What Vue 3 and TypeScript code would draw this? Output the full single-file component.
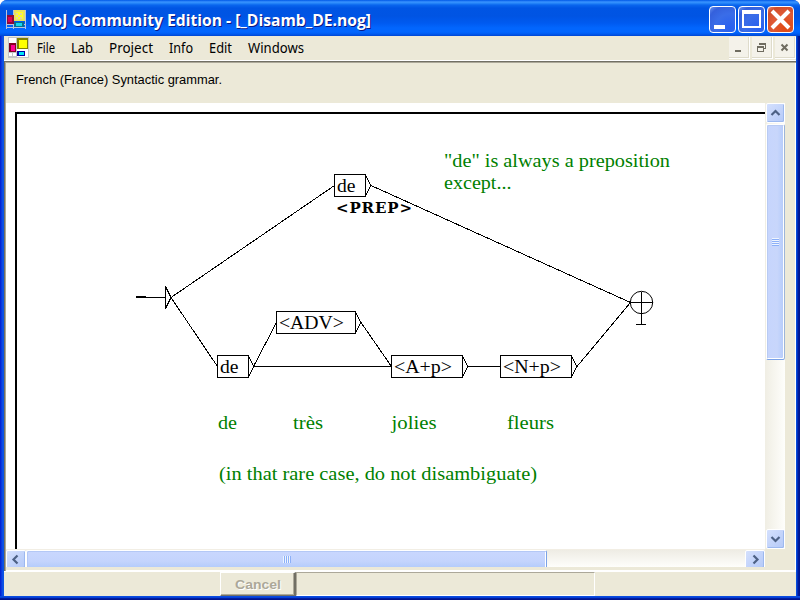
<script setup lang="ts">
interface GraphNode {
  id: string
  label: string
  x: number
  y: number
  w: number
  textW: number
}
interface Note {
  text: string
  x: number
  y: number
  w: number
}

const menus: { label: string; w: number }[] = [
  { label: 'File', w: 18 },
  { label: 'Lab', w: 22 },
  { label: 'Project', w: 44 },
  { label: 'Info', w: 24 },
  { label: 'Edit', w: 23 },
  { label: 'Windows', w: 56 },
]

const nodes: GraphNode[] = [
  { id: 'prep', label: 'de', x: 334, y: 174, w: 31, textW: 18.5 },
  { id: 'adv', label: '<ADV>', x: 276, y: 311, w: 79, textW: 65 },
  { id: 'de', label: 'de', x: 217, y: 355, w: 31, textW: 18.5 },
  { id: 'adj', label: '<A+p>', x: 391, y: 355, w: 71, textW: 58 },
  { id: 'noun', label: '<N+p>', x: 500, y: 355, w: 71, textW: 58 },
]

const links: number[][] = [
  [170.5, 297, 334, 185],
  [170.5, 297, 217, 366],
  [370.5, 185, 630, 302],
  [253, 366, 276, 322],
  [253, 366, 391, 366],
  [360.5, 322, 391, 366],
  [467, 366, 500, 366],
  [576.5, 366, 630, 302],
]

const notes: Note[] = [
  { text: '"de" is always a preposition', x: 444, y: 167, w: 226 },
  { text: 'except...', x: 444, y: 189, w: 67.5 },
  { text: 'de', x: 218, y: 429, w: 19 },
  { text: 'très', x: 293, y: 429, w: 30 },
  { text: 'jolies', x: 391.5, y: 429, w: 45 },
  { text: 'fleurs', x: 507, y: 429, w: 47 },
  { text: '(in that rare case, do not disambiguate)', x: 219, y: 480, w: 318 },
]
</script>

<template>
  <div class="window">
    <header class="titlebar">
      <svg class="app-icon" width="20" height="19" viewBox="0 0 20 19" shape-rendering="crispEdges">
        <path d="M0 0h1v19H0zM7 0h1v19H7zM0 5h7v1H0zM0 14h20v1H0zM0 17h20v1H0zM19 0h1v19h-1z" fill="#b9c4dc" />
        <path d="M1 5h7v9H1z" fill="#8b0a3a" /><path d="M2 7h4v5H2z" fill="#e00050" />
        <path d="M8 0h11v11H8z" fill="#e8e060" /><path d="M10 2h7v7h-7z" fill="#ffff20" />
        <path d="M10 3h2v2h-2zM14 3h2v2h-2zM12 5h2v2h-2zM10 7h2v2h-2zM14 7h2v2h-2z" fill="#e4d898" />
        <path d="M8 12h10v5H8z" fill="#087090" /><path d="M10 13h6v3h-6z" fill="#10d8f0" />
      </svg>
      <svg class="title" width="350" height="24">
        <text x="0" y="17" textLength="341" lengthAdjust="spacingAndGlyphs">NooJ Community Edition - [_Disamb_DE.nog]</text>
      </svg>
      <div class="caption-buttons">
        <button class="cap"><svg width="23" height="23"><path d="M3 17h11v4H3z" fill="#fff" /></svg></button>
        <button class="cap"><svg width="23" height="23"><path fill-rule="evenodd" d="M2 2h19v18H2zM4 6v12h15V6z" fill="#fff" /></svg></button>
        <button class="cap close"><svg width="23" height="23"><path d="M3 3l17 17M20 3l-17 17" stroke="#fff" stroke-width="4" /></svg></button>
      </div>
    </header>

    <nav class="menubar">
      <svg class="doc-icon" width="21" height="21" viewBox="0 0 21 21" shape-rendering="crispEdges">
        <path d="M0 0h21v21H0z" fill="#c4c4c4" />
        <path d="M1 1h7v5H1zM1 16h3v3H1zM5 16h3v3H5zM9 12h11v8H9z" fill="#fff" />
        <path d="M1 6h7v9H1z" fill="#850020" /><path d="M3 8h4v6H3z" fill="#ff0090" />
        <path d="M9 1h11v11H9z" fill="#808000" /><path d="M11 3h8v8h-8z" fill="#ffff00" />
        <path d="M9 14h8v5H9z" fill="#0000a0" /><path d="M11 15h5v3h-5z" fill="#00e8f8" />
      </svg>
      <svg v-for="m in menus" :key="m.label" class="menu" :width="m.w + 1" height="22">
        <text x="0" y="15" :textLength="m.w" lengthAdjust="spacingAndGlyphs">{{ m.label }}</text>
      </svg>
      <div class="mdi-buttons">
        <button class="mdi"><svg width="20" height="21"><path d="M6 13h6v2H6z" fill="#6f6c60" /></svg></button>
        <button class="mdi"><svg width="20" height="21" fill="none" stroke="#6f6c60" shape-rendering="crispEdges"><path d="M5.5 9.5h6v5h-6zM5 10.500h7M7.500 8V6.500h6v5H12M7 7.500h7" /></svg></button>
        <button class="mdi"><svg width="20" height="21"><path d="M6.500 7.500l6 6M12.500 7.500l-6 6" stroke="#6f6c60" stroke-width="2" /></svg></button>
      </div>
    </nav>

    <main class="document">
      <div class="info">
        <svg width="220" height="20"><text x="0" y="12" textLength="206" lengthAdjust="spacingAndGlyphs">French (France) Syntactic grammar.</text></svg>
      </div>
      <div class="viewport">
        <svg class="graph" width="759" height="446" viewBox="6 103 759 446">
          <path d="M15 549V112H765V114H17V549z" fill="#000" />
          <g class="strokes" transform="translate(.5 .5)">
            <line v-for="(l, i) in links" :key="i" :x1="l[0]" :y1="l[1]" :x2="l[2]" :y2="l[3]" />
            <path d="M135 296H145M135 297H165M165 286V308M165 286L170.500 297L165 308" />
            <g v-for="n in nodes" :key="n.id">
              <rect :x="n.x" :y="n.y" :width="n.w" height="22" />
              <path :d="`M${n.x + n.w} ${n.y + 1}l5.5 10l-5.5 10`" />
            </g>
            <circle cx="641" cy="302" r="11.200" shape-rendering="auto" />
            <path d="M630 302H652M641 291V324M635 324H645" />
          </g>
          <text v-for="n in nodes" :key="n.id" class="label" :x="n.x + 3" :y="n.y + 18" :textLength="n.textW" lengthAdjust="spacingAndGlyphs">{{ n.label }}</text>
          <text class="output" x="336" y="213" textLength="76" lengthAdjust="spacing">&lt;PREP&gt;</text>
          <text v-for="n in notes" :key="n.text" class="note" :x="n.x" :y="n.y" :textLength="n.w" lengthAdjust="spacingAndGlyphs">{{ n.text }}</text>
        </svg>
        <div class="vscroll">
          <button class="sb"><svg width="17" height="18"><path d="M4.500 11l4-4l4 4" /></svg></button>
          <div class="vthumb"><i class="vgrip"></i></div>
          <div class="space"></div>
          <button class="sb"><svg width="17" height="18"><path d="M4.500 7l4 4l4-4" /></svg></button>
        </div>
        <div class="hscroll">
          <button class="sb"><svg width="18" height="17"><path d="M10.500 4.500l-4 4l4 4" /></svg></button>
          <div class="hthumb"><i class="hgrip"></i></div>
          <div class="space"></div>
          <button class="sb"><svg width="18" height="17"><path d="M7.500 4.500l4 4l-4 4" /></svg></button>
        </div>
      </div>
    </main>

    <footer class="statusbar">
      <button class="cancel"><svg width="50" height="20"><text class="shadow" x="3" y="16" textLength="46" lengthAdjust="spacingAndGlyphs">Cancel</text><text x="2" y="15" textLength="46" lengthAdjust="spacingAndGlyphs">Cancel</text></svg></button>
      <div class="progress"></div>
    </footer>
    <div class="bottom-edge"></div>
  </div>
</template>

<style>
body { margin: 0; background: #fff; overflow: hidden; }
</style>

<style scoped>
* { box-sizing: border-box; }
svg { display: block; flex: none; }
button { padding: 0; margin: 0; border: 0; display: block; flex: none; }
.window {
  width: 800px; height: 600px; display: flex; flex-direction: column;
  padding: 0 4px; border-radius: 7px 7px 0 0; overflow: hidden;
  background: linear-gradient(90deg, #0019cf 0, #0831d9 1px, #0f55ea 3px, #0855dd 4px, #0855dd 796px, #0441d8 797px, #001da0 798px, #00138c 800px);
}
.bottom-edge { height: 4px; flex: none; margin: 0 -4px; background: linear-gradient(#0a4be0 0 1px, #0441d8 1px 2px, #001da0 2px 3px, #00138c 3px); }
.titlebar {
  height: 36px; flex: none; margin: 0 -4px; padding: 0 6px 0 6px; display: flex; align-items: flex-start;
  background: linear-gradient(#0058e6 0, #3a93ff 2px, #2a8afa 3px, #0a66ee 5px, #0055e4 8px, #0054e3 16px, #005af0 23px, #0266fe 28px, #0266fe 32px, #005bf0 34px, #0046d2 36px);
}
.app-icon { margin-top: 10px; }
.title { margin: 9px 0 0 4px; overflow: visible; }
.title text {
  font: bold 15.5px "Open Sans", "Noto Sans", sans-serif; fill: #fff;
  text-shadow: 1px 1px 0 #0a1883;
}
.caption-buttons { margin: 6px 0 0 auto; display: flex; gap: 2px; }
.cap {
  width: 27px; height: 27px; border: 1px solid #fff; border-radius: 4px; overflow: hidden;
  background: radial-gradient(circle at 80% 85%, #2860f0, #3a6de8 50%, #3460dc 80%, #6b94f0);
}
.cap.close { background: radial-gradient(circle at 70% 80%, #e04810, #e05a36 50%, #d04c28 80%, #eb8a70); }
.cap svg { margin: 1px; }
.menubar { height: 25px; flex: none; padding-left: 4px; background: #ece9d8; display: flex; border-bottom: 1px solid #fff; }
.doc-icon { margin: 1px 8px 0 0; }
.menu { margin: 2px 15px 0 0; overflow: visible; }
.menu text { font: 13.5px "Noto Sans", sans-serif; fill: #000; }
.mdi-buttons { margin: 1px 0 0 auto; display: flex; gap: 2px; }
.mdi { width: 21px; height: 22px; background: #f4f2ea; border: solid #fff; border-width: 0 1px 1px 0; box-shadow: inset -1px -1px #dedbcb; }
.document { height: 510px; flex: none; border: solid #716f64; border-width: 1px 0 0 1px; background: #ece9d8; box-shadow: inset 1px 1px #aca899, inset -1px -1px #fff; padding: 1px 0 0 1px; }
.info { height: 40px; padding: 9px 0 0 10px; }
.info text { font: 13px "Liberation Sans", sans-serif; fill: #000; }
.viewport { display: grid; grid-template: 446px 18px / 759px 20px; }
.graph { background: #fff; }
.strokes { stroke: #000; fill: none; stroke-width: 1; shape-rendering: crispEdges; }
.label { font: 19px "Liberation Serif", serif; fill: #000; }
.note { font: 19px "Liberation Serif", serif; fill: #008000; }
.output { font: bold 15px "DejaVu Serif", serif; fill: #000; }
.vscroll { display: flex; flex-direction: column; padding-left: 1px; background: linear-gradient(90deg, #f0eee4, #fefefb); }
.sb { background: linear-gradient(135deg, #d4e0fd, #b4c9f8); border: 1px solid #fff; border-radius: 2px; box-shadow: inset -1px -1px #9db9ef; }
.sb path { fill: none; stroke: #4d6185; stroke-width: 2.2; }
.vscroll .sb { width: 19px; height: 20px; }
.space { flex: 1; }
.vthumb { height: 236px; margin-top: 1px; border: 1px solid #fff; border-right-color: #9db5d8; border-bottom-color: #7ba2e7; border-radius: 2px; box-shadow: inset -1px -1px #fff, inset 1px 1px #b9cbf3; background: linear-gradient(90deg, #c6d5fd 0, #c8d6fb 60%, #b4cbfb); display: flex; justify-content: center; align-items: center; }
.vgrip { width: 7px; height: 8px; background: repeating-linear-gradient(#eef4fe 0 1px, #8cb0f8 1px 2px); }
.hscroll { display: flex; background: linear-gradient(#eeece4, #fefefb); border-top: 1px solid #f2eee4; overflow: hidden; }
.hscroll .sb { width: 20px; height: 19px; }
.hthumb { width: 521px; height: 19px; border: 1px solid #fff; border-right-color: #7ba2e7; border-radius: 2px; box-shadow: inset 1px 1px #b4c8f6, inset -1px 0 #fff; background: linear-gradient(#c9d7fe 0, #c4d4fd 60%, #b2cbfb); display: flex; justify-content: center; align-items: center; }
.hgrip { width: 8px; height: 7px; background: repeating-linear-gradient(90deg, #eef4fe 0 1px, #8cb0f8 1px 2px); }
.statusbar { flex: 1; background: #ece9d8; display: flex; border-top: 1px solid #fff; padding-left: 216px; }
.cancel { width: 76px; height: 24px; background: #ece9d8; border: solid; border-width: 1px 2px 1px 1px; border-color: #fff #716f64 #716f64 #fff; box-shadow: inset -1px -1px #aca899; padding: 0 0 0 12px; }
.cancel text { font: bold 13.5px "Liberation Sans", sans-serif; fill: #aca899; }
.cancel .shadow { fill: #fff; }
.progress { width: 299px; height: 24px; border: 1px solid #aca899; border-color: #aca899 #fff #fff #aca899; }
</style>
